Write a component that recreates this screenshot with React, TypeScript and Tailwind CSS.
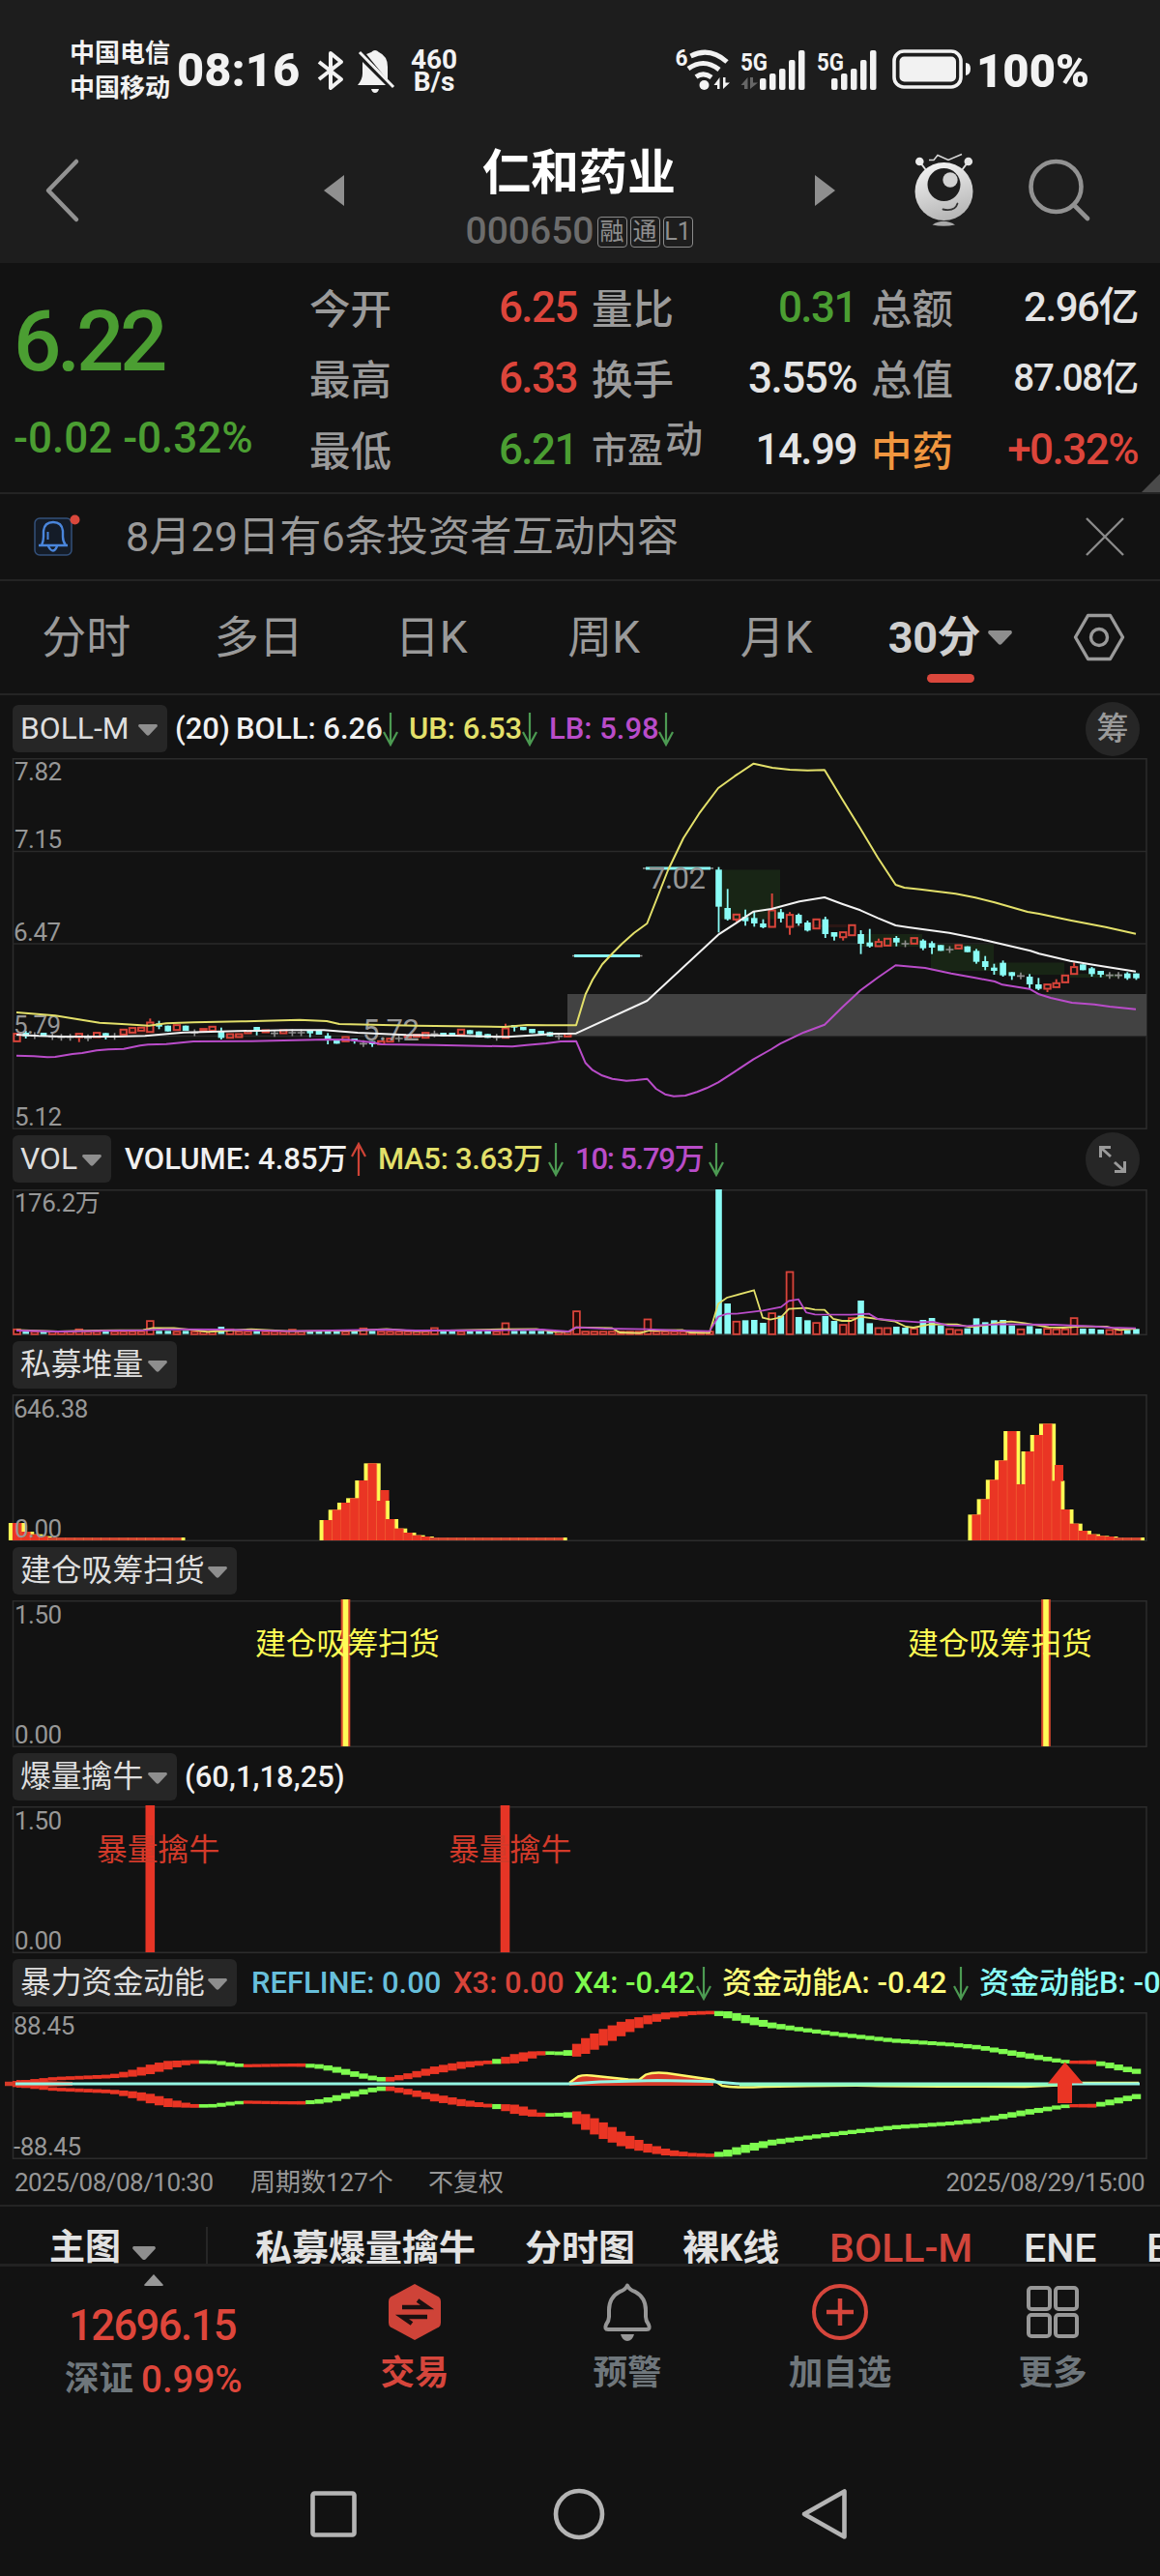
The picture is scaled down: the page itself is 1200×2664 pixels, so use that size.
import type { ReactNode } from "react";

type Kind = "r" | "c" | "g";
type Candle = [kind: Kind, top: number, bottom: number, high?: number, low?: number];
type Point = [x: number, y: number];

const UP = "#d8443a";
const DOWN = "#8afcf6";
const FLAT = "#8f8f8f";
const YELLOW = "#e3e06a";
const PURPLE = "#b94cc9";

// Horizontal centre of the nth bar, shared by every panel
const barX = (n: number) => 17.5 + n * 9.19;

const candles: Candle[] = [
  ["r", 1075, 1103], ["c", 1074, 1085, 1068, 1092], ["g", 1083, 1083], ["c", 1074, 1083],
  ["g", 1086, 1086], ["g", 1088, 1088], ["g", 1088, 1088], ["r", 1075, 1090, 1075, 1103],
  ["g", 1090, 1090], ["r", 1072, 1090], ["c", 1075, 1087, 1075, 1095], ["g", 1085, 1085],
  ["r", 1062, 1082], ["r", 1057, 1076], ["r", 1056, 1070], ["r", 1040, 1074, 1030, 1074],
  ["c", 1045, 1055, 1037, 1063], ["c", 1052, 1070], ["r", 1048, 1068], ["c", 1052, 1068],
  ["g", 1074, 1074], ["r", 1060, 1070], ["r", 1053, 1070], ["c", 1068, 1090, 1058, 1095],
  ["r", 1076, 1092], ["r", 1076, 1090], ["r", 1066, 1078], ["c", 1056, 1070, 1056, 1082],
  ["r", 1064, 1075], ["g", 1076, 1076], ["r", 1064, 1078], ["g", 1074, 1074],
  ["g", 1074, 1074], ["c", 1066, 1076, 1066, 1088], ["c", 1068, 1080], ["c", 1083, 1095, 1075, 1110],
  ["c", 1096, 1108], ["r", 1085, 1103], ["c", 1092, 1100, 1092, 1108], ["g", 1108, 1108],
  ["c", 1100, 1110, 1100, 1118], ["r", 1098, 1112], ["r", 1090, 1104], ["g", 1092, 1092],
  ["r", 1080, 1090], ["r", 1078, 1088], ["r", 1072, 1092], ["g", 1078, 1078],
  ["c", 1074, 1085], ["c", 1074, 1086], ["r", 1062, 1082], ["c", 1066, 1078],
  ["c", 1070, 1088], ["c", 1078, 1090], ["g", 1088, 1088], ["r", 1058, 1092, 1046, 1092],
  ["c", 1050, 1058, 1050, 1070], ["c", 1056, 1066], ["c", 1062, 1075], ["c", 1068, 1078],
  ["c", 1072, 1085], ["g", 1085, 1085], ["r", 1075, 1088],
];

// Trading resumes after the two limit-up sessions
const lateCandles: Candle[] = [
  ["c", 568, 683, 560, 763], ["c", 687, 722, 628, 726], ["r", 705, 725, 705, 730], ["c", 715, 728, 692, 742],
  ["c", 718, 735, 698, 745], ["c", 735, 747, 722, 750], ["r", 692, 748, 642, 748], ["c", 700, 720, 690, 732],
  ["r", 706, 748, 700, 770], ["c", 708, 735, 704, 742], ["c", 732, 757, 726, 760], ["r", 720, 753],
  ["c", 722, 768, 714, 780], ["c", 762, 776, 762, 788], ["r", 760, 780, 760, 788], ["r", 738, 774],
  ["c", 768, 798, 756, 830], ["c", 794, 806, 752, 810], ["r", 790, 808, 782, 808], ["r", 780, 806],
  ["c", 780, 794, 774, 806], ["g", 798, 798], ["r", 778, 800], ["c", 788, 812, 784, 818],
  ["c", 796, 810, 790, 830], ["c", 802, 820], ["g", 816, 816], ["r", 800, 815],
  ["c", 806, 824], ["c", 820, 854, 814, 860], ["c", 852, 870, 836, 880], ["c", 872, 882, 860, 894],
  ["c", 857, 896, 850, 900], ["c", 886, 898, 886, 910], ["g", 898, 898], ["c", 900, 924, 892, 936],
  ["c", 924, 938, 904, 942], ["r", 922, 940, 922, 948], ["r", 918, 935, 908, 935], ["r", 894, 920],
  ["r", 868, 894, 856, 894], ["c", 862, 880], ["c", 874, 892, 870, 900], ["c", 882, 894, 882, 902],
  ["g", 896, 896], ["g", 896, 896], ["c", 890, 905, 886, 910], ["c", 890, 905, 890, 910],
];

const upperBand: Point[] = [
  [17, 1011], [57, 1021], [103, 1043], [126, 1047], [154, 1052], [172, 1045], [200, 1042], [250, 1039],
  [310, 1034], [338, 1038], [351, 1047], [430, 1052], [522, 1056], [545, 1050], [565, 1051], [596, 1051],
  [605.7, 955], [613, 910], [623, 862], [633.5, 828], [643.7, 797], [656, 764], [669.4, 735], [682.4, 636],
  [691, 570], [707, 470], [723, 395], [743, 315], [760, 278], [779.6, 239], [799, 252], [817, 258],
  [835.5, 260], [853, 259], [871.4, 350], [890, 440], [908, 530], [926.5, 615], [935.5, 624], [952, 629],
  [968, 635], [988.6, 643], [1009, 655], [1029, 670], [1063, 699], [1075, 705], [1107, 725], [1143.7, 746],
  [1175, 767],
];

const midBand: Point[] = [
  [17, 1080], [40, 1084], [65, 1086], [120, 1086], [150, 1084], [190, 1073], [245, 1069], [300, 1066],
  [335, 1066], [370, 1074], [420, 1081], [470, 1083], [525, 1087], [545, 1083], [575, 1077], [596, 1076],
  [669.4, 975], [743, 770], [779.6, 698], [798, 690], [827, 667], [853, 654], [871, 674], [890, 694],
  [908, 718], [926.5, 741], [939.6, 747], [982, 764], [1021, 788], [1066, 820], [1075, 829], [1107, 851],
  [1131, 863], [1175, 884],
];

const lowerBand: Point[] = [
  [17, 1145], [35, 1147], [49, 1150], [57, 1149], [75, 1140], [85, 1137], [100, 1129], [112, 1126],
  [128, 1124], [145, 1114], [153, 1111], [172, 1109], [200, 1101], [260, 1100], [338, 1095], [360, 1096],
  [385, 1104], [395, 1110], [450, 1112], [530, 1117], [545, 1112], [565, 1107], [580, 1101], [596, 1100],
  [605.7, 1168], [613, 1190], [623, 1207], [633.5, 1217], [648, 1223], [658, 1221], [669.4, 1217], [678.7, 1248],
  [688, 1265], [697, 1271], [709, 1269], [721, 1258], [731, 1246], [743, 1228], [760, 1195], [779.6, 1156],
  [798, 1125], [807, 1108], [831.5, 1073], [853, 1049], [871, 996], [890, 943], [908, 903], [926.5, 865],
  [957, 873], [984, 890], [1009, 904], [1029, 915], [1037, 925], [1065, 938], [1075, 955], [1087, 966],
  [1109, 981], [1132, 986], [1148, 993], [1175, 1001],
];

const lateVolume = [
  180, 534, 588, 586, 585, 594, 562, 572, 434, 576, 586, 592, 573, 588, 598, 577, 525, 595, 608, 608, 606, 609, 610, 585,
  579, 602, 611, 614, 611, 580, 592, 586, 585, 602, 612, 604, 612, 610, 612, 612, 577, 612, 612, 615, 614, 614, 616, 613,
];
const lateVolumeKind = "ccrcccrcrccrccrrccrrccrcccrrccccccrccrrrrcccrrcc";

const earlyVolume: Record<number, number> = {
  0: 612, 7: 612, 15: 586, 23: 606, 24: 612, 31: 613, 39: 609, 47: 608, 55: 593, 63: 556, 71: 581,
};

const volMa5: Point[] = [
  [17, 616], [60, 621], [100, 618], [148, 616], [158, 610], [180, 610], [200, 616], [215, 622], [235, 618],
  [260, 614], [300, 620], [370, 618], [400, 613], [430, 620], [520, 614], [555, 613], [575, 622], [588, 622],
  [596, 608], [633, 610], [641, 624], [662, 626], [672, 618], [706, 616], [714, 624], [734, 625], [743, 535],
  [752, 516], [780, 493], [789, 578], [797, 584], [808, 577], [816, 551], [834, 548], [843, 553], [853, 554],
  [862, 582], [871, 588], [880, 588], [890, 575], [908, 582], [926, 590], [937, 606], [945, 609], [963, 598],
  [990, 599], [1003, 607], [1020, 602], [1035, 592], [1046, 590], [1060, 595], [1085, 608], [1100, 609],
  [1120, 605], [1145, 606], [1158, 616], [1175, 612],
];

const volMa10: Point[] = [
  [17, 618], [60, 621], [150, 617], [170, 614], [230, 615], [300, 620], [400, 615], [430, 618], [520, 617],
  [560, 615], [588, 621], [596, 608], [625, 612], [670, 614], [700, 618], [734, 620], [743, 575], [752, 566],
  [761, 566], [789, 556], [808, 545], [816, 526], [826, 521], [834, 562], [843, 568], [880, 569], [899, 566],
  [908, 582], [926, 587], [950, 592], [965, 591], [980, 602], [1000, 604], [1035, 598], [1090, 600],
  [1130, 605], [1150, 609], [1175, 611],
];

const stacks: { start: number; tops: number[] }[] = [
  { start: 0, tops: [1215, 1242, 1250, 1256, ...Array(15).fill(1260)] },
  { start: 35, tops: [1206, 1174, 1152, 1138, 1083, 1030, 1146, 1203, 1232, 1245, 1253, 1257, ...Array(15).fill(1260)] },
  {
    start: 108,
    tops: [1189, 1141, 1081, 1021, 930, 1095, 993, 942, 907, 1084, 1173, 1217, 1239, 1250, 1255, 1257, 1260, 1260, 1260],
  },
];

// [x, centre, thickness, colour up to the next key]
const ribbon: [number, number, number, "r" | "g"][] = [
  [17, 401, 8, "r"], [57, 389, 9, "r"], [115, 382, 10, "r"], [134, 374, 18, "r"], [153, 362, 28, "r"],
  [172, 348, 26, "r"], [191, 340, 14, "r"], [203, 337, 9, "g"], [222, 338, 9, "g"], [232, 342, 11, "g"],
  [245, 347, 9, "g"], [254.5, 349, 8, "r"], [298, 347, 8, "r"], [313, 347, 9, "g"], [333, 352, 13, "g"],
  [352, 364, 17, "g"], [371, 378, 15, "g"], [390, 390, 12, "g"], [401, 392, 12, "r"], [421, 382, 16, "r"],
  [451, 362, 22, "r"], [478, 347, 20, "r"], [506, 338, 9, "g"], [521, 333, 18, "r"], [536, 325, 30, "r"],
  [551, 315, 20, "r"], [562, 309, 9, "g"], [585, 311, 10, "g"], [594, 304, 32, "r"], [600, 296, 46, "r"],
  [623, 262, 50, "r"], [646, 230, 42, "r"], [669, 207, 26, "r"], [692, 192, 18, "r"], [715, 186, 10, "r"],
  [736, 184, 9, "g"], [753, 191, 20, "g"], [776, 208, 24, "g"], [799, 224, 16, "g"], [830, 237, 11, "g"],
  [868, 252, 11, "g"], [925, 271, 11, "g"], [983, 283, 10, "g"], [1013, 292, 12, "g"], [1059, 316, 16, "g"],
  [1098, 335, 10, "g"], [1108, 338, 8, "r"], [1131, 338, 10, "g"], [1151, 350, 17, "g"], [1174, 366, 14, "g"],
  [1183, 368, 14, "g"],
];

function ribbonAt(x: number) {
  let i = 0;
  while (i < ribbon.length - 2 && ribbon[i + 1][0] <= x) i++;
  const [x0, y0, t0, kind] = ribbon[i];
  const [x1, y1, t1] = ribbon[i + 1];
  const k = Math.min(1, Math.max(0, (x - x0) / (x1 - x0)));
  return { y: y0 + (y1 - y0) * k, t: t0 + (t1 - t0) * k, kind };
}

const toPoints = (points: Point[], base: number) =>
  points.map(([x, y]) => `${x},${(base + y / 3).toFixed(1)}`).join(" ");

function Panel({ top, height, grid = [], children }: { top: number; height: number; grid?: number[]; children: ReactNode }) {
  return (
    <svg className="block w-full shrink-0 overflow-visible" height={height} viewBox={`0 ${top} 1200 ${height}`}>
      <rect x="13.5" y={top + 0.75} width="1172.5" height={height - 1.5} fill="none" stroke="#2c2c2c" strokeWidth="1.5" />
      {grid.map((y) => (
        <line key={y} x1="13" x2="1186" y1={y} y2={y} stroke="#2a2a2a" strokeWidth="1.5" />
      ))}
      {children}
    </svg>
  );
}

function Label({ x = 15, y, size = 26, children }: { x?: number; y: number; size?: number; children: ReactNode }) {
  return (
    <text x={x} y={y} fontSize={size} fill="#979797" letterSpacing="-0.5">
      {children}
    </text>
  );
}

function CandleMark({ n, candle, base }: { n: number; candle: Candle; base: number }) {
  const [kind, top, bottom, high = top, low = bottom] = candle;
  const x = barX(n);
  const y = (v: number) => base + v / 3;
  if (kind === "g") {
    return <path d={`M${x - 4} ${y(top)}h8M${x} ${y(top) - 3.5}v7`} stroke={FLAT} strokeWidth="1.6" />;
  }
  if (kind === "c") {
    return (
      <g fill={DOWN}>
        <rect x={x - 0.9} y={y(high)} width="1.8" height={y(low) - y(high)} />
        <rect x={x - 3.3} y={y(top)} width="6.6" height={y(bottom) - y(top)} />
      </g>
    );
  }
  return (
    <g stroke={UP} strokeWidth="2" fill="none">
      <path d={`M${x} ${y(high)}V${y(top)}M${x} ${y(bottom)}V${y(low)}`} />
      <rect x={x - 3.2} y={y(top) + 0.8} width="6.4" height={Math.max(2, y(bottom) - y(top) - 1.6)} />
    </g>
  );
}

function PriceChart() {
  return (
    <Panel top={784} height={384} grid={[880.5, 976, 1071.5]}>
      <rect x="587" y="1028" width="599" height="43" fill="#424242" />
      <g fill="#182515">
        <rect x="746" y="899.5" width="61" height="51" />
        <rect x="890" y="966" width="64" height="13" />
        <rect x="963" y="976.5" width="65" height="27.5" />
        <rect x="1029" y="995.5" width="72" height="12.5" />
        <rect x="1107" y="1007" width="53" height="4" />
      </g>
      <rect x="125" y="1065" width="28" height="5" fill="#2b1715" />
      <rect x="816" y="956" width="60" height="3" fill="#2b1715" />
      {candles.map((candle, n) => (
        <CandleMark key={n} n={n} candle={candle} base={710} />
      ))}
      {lateCandles.map((candle, i) => (
        <CandleMark key={i} n={79 + i} candle={candle} base={710} />
      ))}
      <path d="M592 988.5H664.5M665 898H738" stroke={FLAT} strokeWidth="1.6" />
      <path d="M594 988.5H662M668 898H735" stroke={DOWN} strokeWidth="3" />
      <Label y={807}>7.82</Label>
      <Label y={877}>7.15</Label>
      <Label x={14} y={973}>6.47</Label>
      <Label x={14} y={1069}>5.79</Label>
      <Label y={1164}>5.12</Label>
      <Label x={375} y={1076} size={31}>5.72</Label>
      <Label x={671} y={919} size={31}>7.02</Label>
      <g fill="none" strokeWidth="2" strokeLinejoin="round">
        <polyline points={toPoints(upperBand, 710)} stroke={YELLOW} />
        <polyline points={toPoints(midBand, 710)} stroke="#f2f2f2" />
        <polyline points={toPoints(lowerBand, 710)} stroke={PURPLE} />
      </g>
    </Panel>
  );
}

function VolumeBar({ n, top, down }: { n: number; top: number; down: boolean }) {
  const x = barX(n);
  const y = 1170 + top / 3;
  return down ? (
    <rect x={x - 3.3} y={y} width="6.6" height={1379.5 - y} fill={DOWN} />
  ) : (
    <rect x={x - 3.4} y={y + 0.8} width="6.8" height={1379 - y} fill="#250a08" stroke={UP} strokeWidth="1.8" />
  );
}

function VolumeChart() {
  return (
    <Panel top={1230} height={151}>
      <Label y={1253}>176.2万</Label>
      {Array.from({ length: 79 }, (_, n) => (
        <VolumeBar key={n} n={n} top={earlyVolume[n] ?? 619} down={candles[n]?.[0] === "c"} />
      ))}
      {lateVolume.map((top, i) => (
        <VolumeBar key={i} n={79 + i} top={top} down={lateVolumeKind[i] === "c"} />
      ))}
      <polyline points={toPoints(volMa5, 1170)} fill="none" stroke={YELLOW} strokeWidth="1.8" />
      <polyline points={toPoints(volMa10, 1170)} fill="none" stroke={PURPLE} strokeWidth="1.8" />
    </Panel>
  );
}

function StackChart() {
  const base = 1593;
  const bars = stacks.flatMap(({ start, tops }) => tops.map((top, i) => ({ n: start + i, y: 1170 + top / 3 })));
  return (
    <Panel top={1442} height={152}>
      {bars.map(({ n, y }) => (
        <rect key={n} x={barX(n) - 8.6} y={y} width="17.2" height={base - y} fill="#fdfb54" />
      ))}
      <rect x="393.5" y="1541" width="9" height="11" fill="#ea3524" />
      <rect x="1091" y="1515" width="9" height="17" fill="#ea3524" />
      {bars.map(({ n, y }) => (
        <g key={n}>
          <rect x={barX(n) - 4.6} y={y} width="9.25" height={base - y} fill={y > 1589 ? "#cf4630" : "#ea3524"} />
          <line x1={barX(n) + 4.6} x2={barX(n) + 4.6} y1={y} y2={base} stroke="#f4713a" strokeWidth="0.8" />
        </g>
      ))}
      <Label x={14} y={1466}>646.38</Label>
      <Label y={1590}>0.00</Label>
    </Panel>
  );
}

function SignalChart({ top, marks, color, core, children }: {
  top: number;
  marks: number[];
  color: string;
  core?: string;
  children: ReactNode;
}) {
  return (
    <Panel top={top} height={152}>
      <Label y={top + 24}>1.50</Label>
      <Label y={top + 148}>0.00</Label>
      {marks.map((x) => (
        <g key={x}>
          <rect x={x - 4.8} y={top - 1} width="9.6" height="152" fill={color} />
          {core && <rect x={x - 2.8} y={top - 1} width="5.6" height="152" fill={core} />}
        </g>
      ))}
      {children}
    </Panel>
  );
}

function MomentumChart() {
  const color = { r: "#ea3524", g: "#7efb4f" };
  return (
    <Panel top={2081} height={152}>
      <Label x={14} y={2104}>88.45</Label>
      <Label x={14} y={2229}>-88.45</Label>
      {Array.from({ length: 127 }, (_, n) => {
        const { y, t, kind } = ribbonAt(barX(n));
        const h = t / 3 + 0.6;
        return (
          <g key={n} fill={color[kind]}>
            <rect x={barX(n) - 4.6} y={2020 + y / 3 - h / 2} width="9.4" height={h} />
            <rect x={barX(n) - 4.6} y={2020 + (811 - y) / 3 - h / 2} width="9.4" height={h} />
          </g>
        );
      })}
      <path d="M17 2151L75 2153V2157L17 2159z" fill="#ea3524" />
      <path d="M589 2157V2154L600 2147H612L656 2151H662L668 2146L680 2143.5L715 2147L738 2151V2157z" fill="#d63a28" />
      <path
        d="M589 2154L598 2147.5Q604 2145.5 612 2146.5L650 2150.5L661 2151L668 2145.5Q676 2142.5 690 2144L738 2151L747 2157Q760 2159.5 790 2158Q880 2156.5 900 2157T1060 2158L1095 2156.5L1118 2154H1178"
        fill="none"
        stroke="#fdf86a"
        strokeWidth="2.4"
      />
      <path d="M5 2155H20" stroke="#d63a28" strokeWidth="4.5" />
      <path d="M16 2155H590L620 2153L680 2151.5L735 2152.5L765 2155H1179" fill="none" stroke="#94f5e4" strokeWidth="3" />
      <path d="M765 2155.7H1095" stroke="#8dfcc4" strokeWidth="3.6" />
      <path d="M1101.7 2132.5L1120.5 2154.5H1109V2175H1094V2154.5H1084z" fill="#ea3524" />
    </Panel>
  );
}

function Arrow({ up = false }: { up?: boolean }) {
  return (
    <svg className="shrink-0" width="18" height="36" viewBox="0 0 18 36" fill="none" stroke={up ? "#cf4336" : "#4c9a52"} strokeWidth="2.2">
      <path d={up ? "M9 35V2M2 15L9 2L16 15" : "M9 1V34M2 21L9 34L16 21"} />
    </svg>
  );
}

function Caret({ className = "w-5" }: { className?: string }) {
  return (
    <svg className={`h-auto shrink-0 ${className}`} viewBox="0 0 20 12" fill="#8e8e8e">
      <path d="M1 0H19Q20.500 1 19.500 2.500L11.500 11Q10 12.500 8.500 11L.5 2.500Q-.5 1 1 0z" />
    </svg>
  );
}

function IndicatorBar({ name, width, height = "h-[61px] pt-1.5", children }: {
  name: string;
  width: string;
  height?: string;
  children?: ReactNode;
}) {
  return (
    <div className={`flex shrink-0 items-start pl-[13px] text-[31px] ${height}`}>
      <div className={`flex h-[49px] shrink-0 items-center justify-between rounded-md bg-[#262626] pr-[10px] pl-2 text-[31.800px] text-[#dedede] ${width}`}>
        <span className="whitespace-nowrap leading-none">{name}</span>
        <Caret className="mt-0.5 w-5" />
      </div>
      <div className="flex h-[49px] min-w-0 grow items-center whitespace-nowrap font-medium leading-none">{children}</div>
    </div>
  );
}

function Quote({ label, value, tone, size = "text-[44px]" }: { label: ReactNode; value: string; tone: string; size?: string }) {
  return (
    <div className="flex h-[73.500px] items-center justify-between leading-none">
      <span className="whitespace-nowrap text-[42.500px] text-[#9a9a9a]">{label}</span>
      <span className={`-mt-1.5 whitespace-nowrap font-medium tracking-[-0.035em] ${size} ${tone}`}>{value}</span>
    </div>
  );
}

function SignalBars({ x }: { x: number }) {
  return (
    <g>
      {[41, 36, 31, 22, 12].map((y, i) => (
        <rect key={y} x={x + i * 10} y={y} width="6.5" height={53 - y} rx="2" />
      ))}
    </g>
  );
}

function StatusBar() {
  return (
    <div className="flex h-[136px] items-start text-[#f2f2f2]">
      <div className="mt-[37px] ml-[72px] w-[111px] shrink-0 text-[26px] font-bold leading-9">
        <div>中国电信</div>
        <div>中国移动</div>
      </div>
      <div className="mt-12 w-[142px] text-[49px] font-extrabold leading-none">08:16</div>
      <svg className="mt-[50px]" width="88" height="48" viewBox="325 50 88 48" fill="none">
        <path d="M330 64L353 82L342 91V55L353 64L330 82" stroke="currentColor" strokeWidth="4" strokeLinejoin="round" />
        <path d="M384 54Q388 50 392 54Q401 58 401 69V83L379 56zM375 64L399 88H370Q375 82 375 76z" fill="currentColor" />
        <path d="M372 54L407 90" stroke="currentColor" strokeWidth="3" />
        <path d="M384 92H392Q391 96 388 96T384 92z" fill="currentColor" />
      </svg>
      <div className="mt-[50px] ml-2 w-14 text-center text-[28px] font-bold leading-[23px]">
        <div>460</div>
        <div>B/s</div>
      </div>
      <svg className="mt-10 ml-[203px] shrink-0" width="480" height="70" viewBox="0 0 480 70" fill="currentColor">
        <text x="18.5" y="28" fontSize="24" fontWeight="700" textLength="13" lengthAdjust="spacingAndGlyphs">6</text>
        <g fill="none" stroke="currentColor" strokeWidth="5">
          <path d="M34.500 18Q54 8 72 24" />
          <path d="M32 31Q48 19.500 64 32" />
          <path d="M40 39.500Q48 34 56 40" />
        </g>
        <circle cx="48.500" cy="48" r="5" />
        <path d="M58.500 48L64.500 40V52H62V48zM68 40V52L75 45.500H70.500V40z" />
        <text x="86" y="32.500" fontSize="26.500" fontWeight="700" textLength="28" lengthAdjust="spacingAndGlyphs">5G</text>
        <path d="M86.500 48L93.500 40V52H90V48zM96 40V52L104 45.500H99V40z" fill="#666" />
        <SignalBars x={106} />
        <text x="165" y="32.500" fontSize="26.500" fontWeight="700" textLength="28" lengthAdjust="spacingAndGlyphs">5G</text>
        <SignalBars x={180} />
        <rect x="245" y="13" width="69" height="37" rx="10" fill="none" stroke="currentColor" strokeWidth="3.600" />
        <rect x="250.500" y="18.500" width="58.500" height="26" rx="5" />
        <path d="M319 25Q324 25 324 31T319 38z" />
        <text x="330" y="50" fontSize="49" fontWeight="900" textLength="117" lengthAdjust="spacingAndGlyphs">100%</text>
      </svg>
    </div>
  );
}

function TitleBar() {
  return (
    <div className="flex h-[136px] items-start">
      <svg className="mt-[26px] ml-[43px] shrink-0" width="42" height="70" viewBox="0 0 42 70" fill="none" stroke="#929292" strokeWidth="4.500">
        <path d="M36 5L7 35L36 65" strokeLinecap="round" strokeLinejoin="round" />
      </svg>
      <svg className="mt-[45px] ml-[250px] shrink-0" width="21" height="32" viewBox="0 0 21 32" fill="#8f8f8f">
        <path d="M21 0V32L0 16z" />
      </svg>
      <div className="mt-[17px] ml-[81px] flex w-[324px] shrink-0 flex-col items-center leading-none">
        <h1 className="text-[50px] font-bold leading-[52px] text-white">仁和药业</h1>
        <div className="mt-[15px] flex items-center gap-[3px] text-[25px] text-[#8f8f8f]">
          <span className="text-[39px] font-medium text-[#6c6c6c]">000650</span>
          {["融", "通", "L1"].map((tag) => (
            <span key={tag} className="flex h-8 w-[31px] items-center justify-center rounded-[4px] border-[1.500px] border-[#8a8a8a]">
              {tag}
            </span>
          ))}
        </div>
      </div>
      <svg className="mt-[45px] ml-[82px] shrink-0" width="21" height="32" viewBox="0 0 21 32" fill="#8f8f8f">
        <path d="M0 0V32L21 16z" />
      </svg>
      <svg className="mt-1 ml-[55px] shrink-0" width="240" height="120" viewBox="0 0 240 120">
        <defs>
          <linearGradient id="robot" x1="0.3" y1="0" x2="0.6" y2="1">
            <stop offset="0" stopColor="#f3f3f3" />
            <stop offset="1" stopColor="#b4b4b4" />
          </linearGradient>
        </defs>
        <path d="M42 25.500H47L51 20.500L62 25.500L76 19.500" fill="none" stroke="#d8d8d8" strokeWidth="1.500" />
        <path d="M33 28L39 36M82 28L76 36" stroke="#dedede" strokeWidth="2" />
        <circle cx="32.300" cy="27" r="4.300" fill="#ececec" />
        <circle cx="82.800" cy="27" r="4.300" fill="#e4e4e4" />
        <circle cx="57.500" cy="58" r="30" fill="url(#robot)" />
        <circle cx="57.500" cy="51" r="17" fill="#1d1d1d" />
        <circle cx="64" cy="46" r="7.700" fill="#d2d2d2" />
        <path d="M56.500 76.500Q69 79 71.500 70.500" fill="none" stroke="#333" strokeWidth="1.800" strokeLinecap="round" />
        <path d="M45.500 92.500Q57 85 69 92.500Q57 95 45.500 92.500z" fill="#a9a9a9" />
        <circle cx="173.500" cy="53" r="26" fill="none" stroke="#929292" strokeWidth="4.600" />
        <path d="M192.500 72.500L206 86" stroke="#929292" strokeWidth="4.600" strokeLinecap="round" />
      </svg>
    </div>
  );
}

function QuotePanel() {
  return (
    <section className="relative flex h-[239px] shrink-0 items-start border-b-2 border-[#242424] font-medium">
      <div className="w-[320px] shrink-0 pl-3.5 text-[#4b9e32]">
        <div className="mt-[38px] text-[87px] leading-none tracking-[-0.05em]">6.22</div>
        <div className="mt-[34px] whitespace-nowrap text-[44px] leading-none">-0.02 -0.32%</div>
      </div>
      <div className="mt-3 grid grid-cols-[277px_274px_276px] gap-x-[15px]">
        <Quote label="今开" value="6.25" tone="text-[#dc453b]" />
        <Quote label="量比" value="0.31" tone="text-[#4b9e32]" />
        <Quote label="总额" value="2.96亿" tone="text-[#e4e4e4]" size="text-[42px]" />
        <Quote label="最高" value="6.33" tone="text-[#dc453b]" />
        <Quote label="换手" value="3.55%" tone="text-[#e4e4e4]" />
        <Quote label="总值" value="87.08亿" tone="text-[#e4e4e4]" size="text-[38.500px]" />
        <Quote label="最低" value="6.21" tone="text-[#4b9e32]" />
        <Quote
          label={
            <span className="flex text-[37px]">
              市盈<span className="-mt-3 mb-3 ml-0.5 text-[39px]">动</span>
            </span>
          }
          value="14.99"
          tone="text-[#e4e4e4]"
        />
        <Quote label={<span className="text-[#f0963f]">中药</span>} value="+0.32%" tone="text-[#dc453b]" />
      </div>
      <svg className="absolute right-0 bottom-0" width="19" height="19" viewBox="0 0 19 19" fill="#4a4a4a">
        <path d="M19 0V19H0z" />
      </svg>
    </section>
  );
}

function Notice() {
  return (
    <section className="flex h-[90px] shrink-0 items-center border-b-2 border-[#242424]">
      <svg className="ml-8 shrink-0" width="52" height="52" viewBox="32 530 52 52" fill="none">
        <rect x="36" y="537" width="38" height="38" rx="5" fill="#141c28" stroke="#33507a" strokeWidth="1.500" />
        <path d="M40 565H70M43 565Q45 561 45 556V550Q46 541 55 541T65 550V556Q65 561 68 565M50 566Q55 575 59 566" stroke="#4a86dc" strokeWidth="2.400" />
        <path d="M49.500 551V559" stroke="#4a86dc" strokeWidth="2" />
        <circle cx="77.500" cy="538.500" r="5" fill="#d9483c" />
      </svg>
      <p className="mt-0.5 ml-[46px] grow whitespace-nowrap text-[43.200px] leading-none text-[#9a9a9a]">8月29日有6条投资者互动内容</p>
      <svg className="mr-9 shrink-0" width="42" height="42" viewBox="0 0 42 42" stroke="#8a8a8a" strokeWidth="2.400">
        <path d="M2 2L40 40M40 2L2 40" />
      </svg>
    </section>
  );
}

function PeriodTabs() {
  return (
    <nav className="flex h-[118px] shrink-0 items-center border-b-2 border-[#242424] text-[46px] leading-none text-[#9a9a9a]">
      {["分时", "多日", "日K", "周K", "月K"].map((tab) => (
        <span key={tab} className="w-[178.500px] shrink-0 text-center">
          {tab}
        </span>
      ))}
      <span className="relative flex w-[191px] shrink-0 items-center justify-center pr-2.5 font-bold text-[#cfcfcf]">
        <span className="text-[45px] tracking-[-0.01em]">30分</span>
        <Caret className="ml-2 w-[25px]" />
        <i className="absolute top-[60px] left-[66px] h-[9px] w-[49px] rounded-full bg-[#da473c]" />
      </span>
      <svg className="ml-[26px] shrink-0" width="54" height="50" viewBox="0 0 54 50" fill="none" stroke="#9a9a9a" strokeWidth="3.400">
        <path d="M15.500 2.500H38.500L51.500 25L38.500 47.500H15.500L2.500 25z" strokeLinejoin="round" />
        <circle cx="27" cy="25" r="8.500" />
      </svg>
    </nav>
  );
}

function RoundButton({ children }: { children: ReactNode }) {
  return (
    <button className="mr-[21px] ml-auto flex h-14 w-14 shrink-0 items-center justify-center rounded-full bg-[#262626] text-[33px] text-[#9a9a9a]">
      {children}
    </button>
  );
}

function OverlayTabs() {
  return (
    <nav className="flex h-[62px] shrink-0 items-start overflow-hidden border-b-[3px] border-[#222] pt-[21px] text-[38px] font-bold leading-[44px] whitespace-nowrap text-[#e2e2e2]">
      <span className="ml-[51px] text-[37px]">主图</span>
      <Caret className="mt-5 ml-3 w-6" />
      <i className="ml-[52px] h-12 w-[2px] shrink-0 bg-[#262626]" />
      <span className="ml-[49px] w-[279px] shrink-0">私募爆量擒牛</span>
      <span className="w-[163px] shrink-0">分时图</span>
      <span className="w-[152px] shrink-0">裸K线</span>
      <span className="w-[201px] shrink-0 text-[41px] font-medium text-[#d2453b]">BOLL-M</span>
      <span className="w-[127px] shrink-0 text-[41px] font-medium">ENE</span>
      <span className="shrink-0 text-[41px] font-medium">EXPMA</span>
    </nav>
  );
}

function Action({ label, active = false, children }: { label: string; active?: boolean; children: ReactNode }) {
  return (
    <button className="flex w-[220px] shrink-0 flex-col items-center">
      <svg width="60" height="62" viewBox="0 0 60 62" fill="none" stroke="#979797" strokeWidth="4">
        {children}
      </svg>
      <span className={`mt-[15px] text-[35.500px] font-bold leading-none ${active ? "text-[#d6463c]" : "text-[#6f777c]"}`}>{label}</span>
    </button>
  );
}

function BottomBar() {
  return (
    <footer className="flex h-[150px] shrink-0 items-start pt-4 leading-none">
      <div className="w-[319px] shrink-0 pl-[67px] font-medium text-[#de463b]">
        <svg className="-mt-2 ml-[82px]" width="20" height="12" viewBox="0 0 20 12" fill="#979797">
          <path d="M10 0L20 11Q20 12 18 12H2Q0 12 0 11z" />
        </svg>
        <div className="mt-5 pl-1 text-[43.500px] tracking-[-0.035em]">12696.15</div>
        <div className="mt-3.5 flex items-center text-[38.500px]">
          <span className="mr-2 text-[35.500px] font-bold text-[#6f777c]">深证</span>
          <span>0.99%</span>
        </div>
      </div>
      <Action label="交易" active>
        <path d="M30 2L55 15.500Q57 17 57 20V42Q57 45 55 46.500L30 60L5 46.500Q3 45 3 42V20Q3 17 5 15.500z" fill="#cf4338" stroke="none" />
        <path d="M17 26H43L33 19M43 36H17L27 43" stroke="#1a1010" strokeWidth="4.500" />
      </Action>
      <Action label="预警">
        <path d="M30 3.500Q32 8 38 10Q49 16 49 29V36Q49 40 52 44Q54 49 50 49H10Q6 49 8 44Q11 40 11 36V29Q11 16 22 10Q28 8 30 3.500z" strokeLinejoin="round" />
        <path d="M23 54H37Q35 61 30 61T23 54z" fill="#979797" stroke="none" />
      </Action>
      <Action label="加自选">
        <circle cx="30" cy="31" r="27" stroke="#d6463c" />
        <path d="M30 17V45M16 31H44" stroke="#d6463c" strokeWidth="4.500" />
      </Action>
      <Action label="更多">
        <rect x="5" y="6" width="22" height="22" rx="3" />
        <rect x="33" y="6" width="22" height="22" rx="3" />
        <rect x="5" y="34" width="22" height="22" rx="3" />
        <rect x="33" y="34" width="22" height="22" rx="3" />
      </Action>
    </footer>
  );
}

function SystemNav() {
  return (
    <div className="flex grow items-start justify-center gap-[200px] pt-[77px] pr-0.5">
      <svg width="54" height="58" viewBox="0 0 54 58" fill="none" stroke="#b4b4b4" strokeWidth="4.600">
        <rect x="5.500" y="7.500" width="43" height="43" rx="2" />
      </svg>
      <svg width="54" height="58" viewBox="0 0 54 58" fill="none" stroke="#b4b4b4" strokeWidth="4.600">
        <circle cx="27" cy="29" r="24" />
      </svg>
      <svg width="54" height="58" viewBox="0 0 54 58" fill="none" stroke="#b4b4b4" strokeWidth="4.600">
        <path d="M47.500 5.500V52.500L6 29z" strokeLinejoin="round" />
      </svg>
    </div>
  );
}

export default function App() {
  return (
    <div className="flex h-[2664px] w-[1200px] flex-col overflow-hidden bg-[#121212] font-[Roboto,'Noto_Sans_CJK_SC',sans-serif]">
      <header className="h-[272px] shrink-0 bg-[#1d1d1d]">
        <StatusBar />
        <TitleBar />
      </header>
      <QuotePanel />
      <Notice />
      <PeriodTabs />

      <IndicatorBar name="BOLL-M" width="w-[160px]" height="h-[65px] pt-2.5">
        <span className="ml-2 w-[63px] text-[#f0f0f0]">(20)</span>
        <span className="w-[151px] text-[#f0f0f0]">BOLL: 6.26</span>
        <Arrow />
        <span className="ml-[10px] w-[116px] text-[#e3e06a]">UB: 6.53</span>
        <Arrow />
        <span className="ml-[11px] w-[112px] text-[#b94cc9]">LB: 5.98</span>
        <Arrow />
        <RoundButton>筹</RoundButton>
      </IndicatorBar>
      <PriceChart />

      <IndicatorBar name="VOL" width="w-[102px]" height="h-[62px] pt-1.5">
        <span className="ml-[14px] w-[233px] text-[#f0f0f0]">VOLUME: 4.85万</span>
        <Arrow up />
        <span className="ml-[11px] w-[175px] tracking-[-0.01em] text-[#e3e06a]">MA5: 3.63万</span>
        <Arrow />
        <span className="ml-[11px] w-[137px] tracking-[-0.04em] text-[#b94cc9]">10: 5.79万</span>
        <Arrow />
        <RoundButton>
          <svg width="30" height="30" viewBox="0 0 30 30" fill="none" stroke="currentColor" strokeWidth="3">
            <path d="M2.500 13V2.500H13M3 3L13 12M27.500 17V27.500H17M27 27L17 18" />
          </svg>
        </RoundButton>
      </IndicatorBar>
      <VolumeChart />

      <IndicatorBar name="私募堆量" width="w-[170px]" />
      <StackChart />

      <IndicatorBar name="建仓吸筹扫货" width="w-[232px]" />
      <SignalChart top={1655} marks={[357.5, 1082]} color="#d9482c" core="#fffb57">
        <g fontSize="31.8" fill="#fdfb54">
          <text x="264" y="1711">建仓吸筹扫货</text>
          <text x="939" y="1711">建仓吸筹扫货</text>
        </g>
      </SignalChart>

      <IndicatorBar name="爆量擒牛" width="w-[170px]">
        <span className="ml-2 text-[#f0f0f0]">(60,1,18,25)</span>
      </IndicatorBar>
      <SignalChart top={1868} marks={[155.3, 522.5]} color="#e63526">
        <g fontSize="31.8" fill="#d23a2a">
          <text x="100" y="1924">暴量擒牛</text>
          <text x="464" y="1924">暴量擒牛</text>
        </g>
      </SignalChart>

      <IndicatorBar name="暴力资金动能" width="w-[232px]">
        <span className="ml-[15px] w-[209px] shrink-0 text-[#67bfdb]">REFLINE: 0.00</span>
        <span className="w-[125px] shrink-0 text-[#d8443a]">X3: 0.00</span>
        <span className="w-[125px] shrink-0 text-[#7efb4f]">X4: -0.42</span>
        <Arrow />
        <span className="ml-[10px] w-[238px] shrink-0 text-[#fdfb7a]">资金动能A: -0.42</span>
        <Arrow />
        <span className="ml-[10px] shrink-0 text-[#8afcf6]">资金动能B: -0.42</span>
      </IndicatorBar>
      <MomentumChart />

      <div className="flex h-[49px] shrink-0 items-center border-b-2 border-[#242424] pr-4 pl-[15px] text-[26px] leading-none text-[#979797]">
        <span className="w-[244px] tracking-[-0.02em]">2025/08/08/10:30</span>
        <span className="w-[184px]">周期数127个</span>
        <span>不复权</span>
        <span className="ml-auto tracking-[-0.02em]">2025/08/29/15:00</span>
      </div>
      <OverlayTabs />
      <BottomBar />
      <SystemNav />
    </div>
  );
}
